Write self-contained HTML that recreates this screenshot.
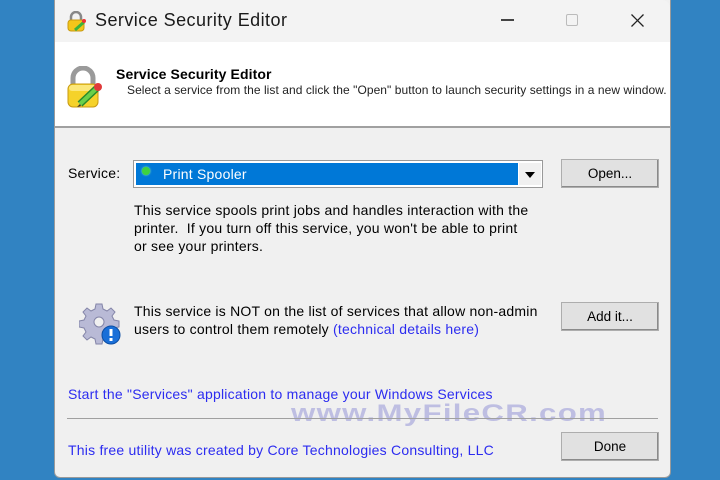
<!DOCTYPE html>
<html><head><meta charset="utf-8"><style>
*{margin:0;padding:0;box-sizing:border-box}
body{width:720px;height:480px;background:#3183c2;position:relative;overflow:hidden;font-family:"Liberation Sans",sans-serif;font-size:14px;letter-spacing:0.22px;color:#000}
.win{position:absolute;left:54px;top:0;width:617px;height:478px;background:#f0f0f0;border:1px solid #9a9a9a;border-top:none;border-radius:0 0 6px 6px;overflow:hidden}
.title{position:absolute;left:0;top:0;width:100%;height:42px;background:#f3f3f3;border-radius:0 8px 0 0}
.hdr{position:absolute;left:0;top:42px;width:100%;height:86px;background:#fff;border-bottom:2px solid #a0a0a0}
.a{position:absolute;white-space:nowrap}
.btn{position:absolute;width:98px;height:29px;background:#e1e1e1;border:1px solid #adadad;box-shadow:inset -1px -1px 0 #8a8a8a;text-align:center;line-height:27px;font-size:13.5px;letter-spacing:0}
.blue{color:#2c2cf0}
</style></head><body>
<div class="win">
 <div class="title">
  <svg class="a" style="left:12px;top:11px" width="20" height="22" viewBox="0 0 20 22"><path d="M4 10V6a5 5 0 0 1 10 0v4" fill="none" stroke="#888" stroke-width="2.5"/><rect x="1" y="9" width="16" height="11" rx="3" fill="#f3c61a" stroke="#c99a10"/><path d="M8 19l9-8" stroke="#3bb33b" stroke-width="3"/><circle cx="17" cy="10" r="2" fill="#e33"/></svg>
  <div class="a" style="left:40px;top:10px;font-size:18px;letter-spacing:0.45px;color:#1a1a1a">Service Security Editor</div>
  <div class="a" style="left:446px;top:19px;width:13px;height:1.5px;background:#444"></div>
  <div class="a" style="left:511px;top:14px;width:12px;height:12px;border:1px solid #bbb;border-radius:2px"></div>
  <svg class="a" style="left:576px;top:14px" width="13" height="13"><path d="M0.5 0.5L12.5 12.5M12.5 0.5L0.5 12.5" stroke="#222" stroke-width="1.3"/></svg>
 </div>
 <div class="hdr">
  <svg class="a" style="left:11px;top:24px" width="38" height="44" viewBox="0 0 38 44"><path d="M7 20V12a10 10 0 0 1 20 0v8" fill="none" stroke="#9a9a9a" stroke-width="5"/><rect x="2" y="18" width="30" height="23" rx="5" fill="#f5d22a" stroke="#c89a12"/><rect x="3" y="19" width="28" height="6" rx="3" fill="#fbe77a"/><path d="M14 38l17-16" stroke="#2a8a2a" stroke-width="7"/><path d="M14 38l17-16" stroke="#6ad04a" stroke-width="4"/><circle cx="32" cy="21" r="4" fill="#e03a3a"/><path d="M11 41l3-3 1 2z" fill="#333"/></svg>
  <div class="a" style="left:61px;top:24px;font-weight:bold;font-size:14px;letter-spacing:0.1px">Service Security Editor</div>
  <div class="a" style="left:72px;top:41px;font-size:12px;letter-spacing:0.06px;color:#222">Select a service from the list and click the "Open" button to launch security settings in a new window.</div>
 </div>
 <div class="a" style="left:13px;top:165px">Service:</div>
 <div class="a" style="left:78px;top:160px;width:410px;height:28px;border:1px solid #999;background:#fff">
  <div class="a" style="left:2px;top:2px;width:382px;height:22px;background:#0078d7"></div>
  <div class="a" style="left:8px;top:6px;width:8px;height:8px;border-radius:50%;background:#3fd23f;box-shadow:0 0 2px #9f9"></div>
  <div class="a" style="left:29px;top:5px;color:#fff">Print Spooler</div>
  <div class="a" style="left:385px;top:2px;width:22px;height:22px;background:#f0f0f0"></div>
  <div class="a" style="left:391px;top:11px;width:0;height:0;border-left:5px solid transparent;border-right:5px solid transparent;border-top:6px solid #000"></div>
 </div>
 <div class="btn" style="left:506px;top:159px">Open...</div>
 <div class="a" style="left:79px;top:201px;line-height:18px">This service spools print jobs and handles interaction with the<br>printer.&nbsp; If you turn off this service, you won't be able to print<br>or see your printers.</div>
 <svg class="a" style="left:24px;top:302px" width="44" height="44" viewBox="0 0 44 44"><g transform="translate(20 20)"><g fill="#b9bad6" stroke="#8485a8"><path d="M-3-18h6l1 5 4 2 4-3 4 4-3 4 2 4 5 1v6l-5 1-2 4 3 4-4 4-4-3-4 2-1 5h-6l-1-5-4-2-4 3-4-4 3-4-2-4-5-1v-6l5-1 2-4-3-4 4-4 4 3 4-2z"/></g><circle r="5" fill="#f0f0f0" stroke="#8485a8"/></g><circle cx="32" cy="33" r="9" fill="#1a6fd8" stroke="#0d4ea3"/><rect x="30.5" y="27" width="3" height="7" fill="#fff"/><rect x="30.5" y="36" width="3" height="3" fill="#fff"/></svg>
 <div class="a" style="left:79px;top:302px;line-height:18px">This service is NOT on the list of services that allow non-admin<br>users to control them remotely <span class="blue">(technical details here)</span></div>
 <div class="btn" style="left:506px;top:302px">Add it...</div>
 <div class="a blue" style="left:13px;top:386px">Start the "Services" application to manage your Windows Services</div>
 <div class="a" style="left:236px;top:400px;font-size:24px;font-weight:bold;color:rgba(150,150,215,0.55);letter-spacing:1px;transform:scaleX(1.3);transform-origin:0 0">www.MyFileCR.com</div>
 <div class="a" style="left:12px;top:418px;width:591px;height:1px;background:#a0a0a0"></div>
 <div class="a blue" style="left:13px;top:442px">This free utility was created by Core Technologies Consulting, LLC</div>
 <div class="btn" style="left:506px;top:432px">Done</div>
</div>
</body></html>
